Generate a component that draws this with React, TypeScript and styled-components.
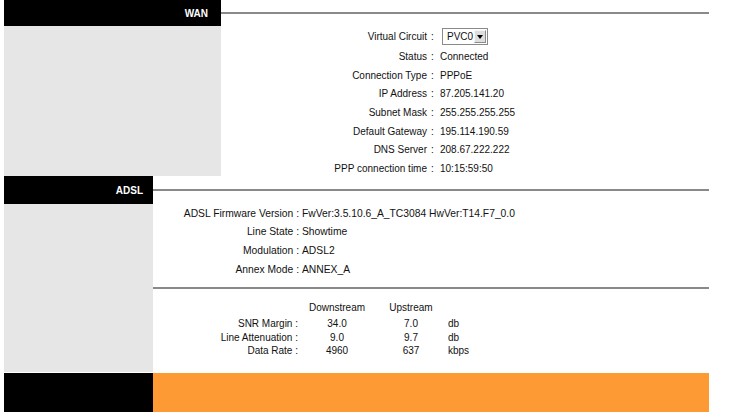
import React from 'react'
import styled, { createGlobalStyle } from 'styled-components'

const GlobalStyle = createGlobalStyle`
  body {
    margin: 0;
    background: #fff;
    font-family: "Liberation Sans", Arial, sans-serif;
    font-size: 10px;
    color: #111;
  }
`

const Page = styled.div`
  width: 705px;
  margin-left: 4px;
`

const Section = styled.section<{ $side: number }>`
  display: grid;
  grid-template-columns: ${(p) => p.$side}px 1fr;
`

const HeaderCell = styled.div<{ $height: number; $pad: number }>`
  height: ${(p) => p.$height}px;
  background: #000;
  color: #fff;
  font-weight: bold;
  font-size: 10px;
  display: flex;
  align-items: center;
  justify-content: flex-end;
  padding-right: ${(p) => p.$pad}px;
`

const HeaderRule = styled.div`
  align-self: center;
  height: 2px;
  background: #898989;
`

const Sidebar = styled.div`
  background: #e6e6e6;
`

const WanBody = styled.div`
  height: 150px;
  display: grid;
  grid-template-columns: 206px 13px 1fr;
  grid-template-rows: 21px;
  grid-auto-rows: 18.7px;
`

const Label = styled.div`
  display: flex;
  align-items: center;
  justify-content: flex-end;
  white-space: nowrap;
`

const Colon = styled.div`
  display: flex;
  align-items: center;
  padding-left: 4px;
`

const Value = styled.div<{ $pad?: number }>`
  display: flex;
  align-items: center;
  white-space: nowrap;
  padding-left: ${(p) => p.$pad ?? 0}px;
`

const SelectBox = styled.div`
  margin-left: 2px;
  width: 46px;
  height: 17px;
  box-sizing: border-box;
  border: 1px solid #8a8a8a;
  background: #fff;
  display: flex;
  align-items: stretch;
`

const SelectText = styled.span`
  flex: 1;
  display: flex;
  align-items: center;
  padding-left: 4px;
`

const SelectButton = styled.span`
  width: 13px;
  box-sizing: border-box;
  margin: 1px;
  background: #dedede;
  border: 1px solid;
  border-color: #f6f6f6 #8c8c8c #8c8c8c #f6f6f6;
  display: flex;
  align-items: center;
  justify-content: center;

  &::after {
    content: '';
    margin-top: 1px;
    border-left: 3.5px solid transparent;
    border-right: 3.5px solid transparent;
    border-top: 4px solid #000;
  }
`

const AdslBody = styled.div`
  height: 168px;
  display: flex;
  flex-direction: column;
`

const InfoGrid = styled.div`
  font-size: 10.3px;
  display: grid;
  grid-template-columns: 146px 1fr;
  grid-auto-rows: 18.6px;
`

const Divider = styled.div`
  margin-top: 8.6px;
  height: 2px;
  background: #898989;
`

const StatsGrid = styled.div`
  padding-top: 12px;
  display: grid;
  grid-template-columns: 145px 78px 70px 1fr;
  grid-template-rows: 16px;
  grid-auto-rows: 13.6px;
`

const StatHead = styled.div`
  text-align: center;
  line-height: 14px;
`

const StatLabel = styled.div`
  text-align: right;
  line-height: 13.6px;
  white-space: nowrap;
`

const StatValue = styled.div`
  text-align: center;
  line-height: 13.6px;
`

const StatUnit = styled.div`
  padding-left: 2px;
  line-height: 13.6px;
`

const Footer = styled.div`
  margin-top: 1px;
  height: 39px;
  display: grid;
  grid-template-columns: 149px 1fr;
`

const FooterBlack = styled.div`
  background: #000;
`

const FooterOrange = styled.div`
  background: #fe9a33;
`

const wanFields: [string, string][] = [
  ['Status', 'Connected'],
  ['Connection Type', 'PPPoE'],
  ['IP Address', '87.205.141.20'],
  ['Subnet Mask', '255.255.255.255'],
  ['Default Gateway', '195.114.190.59'],
  ['DNS Server', '208.67.222.222'],
  ['PPP connection time', '10:15:59:50'],
]

const adslFields: [string, string][] = [
  ['ADSL Firmware Version', 'FwVer:3.5.10.6_A_TC3084 HwVer:T14.F7_0.0'],
  ['Line State', 'Showtime'],
  ['Modulation', 'ADSL2'],
  ['Annex Mode', 'ANNEX_A'],
]

const stats: [string, string, string, string][] = [
  ['SNR Margin', '34.0', '7.0', 'db'],
  ['Line Attenuation', '9.0', '9.7', 'db'],
  ['Data Rate', '4960', '637', 'kbps'],
]

const App: React.FC = () => {
  return (
    <>
      <GlobalStyle />
      <Page>
        <Section $side={217}>
          <HeaderCell $height={26} $pad={13}>WAN</HeaderCell>
          <HeaderRule />
          <Sidebar />
          <WanBody>
            <Label>Virtual Circuit</Label>
            <Colon>:</Colon>
            <Value>
              <SelectBox>
                <SelectText>PVC0</SelectText>
                <SelectButton />
              </SelectBox>
            </Value>
            {wanFields.map(([label, value]) => (
              <React.Fragment key={label}>
                <Label>{label}</Label>
                <Colon>:</Colon>
                <Value>{value}</Value>
              </React.Fragment>
            ))}
          </WanBody>
        </Section>

        <Section $side={149}>
          <HeaderCell $height={28} $pad={10}>ADSL</HeaderCell>
          <HeaderRule />
          <Sidebar />
          <AdslBody>
            <InfoGrid>
              {adslFields.map(([label, value]) => (
                <React.Fragment key={label}>
                  <Label>{label} :</Label>
                  <Value $pad={3}>{value}</Value>
                </React.Fragment>
              ))}
            </InfoGrid>
            <Divider />
            <StatsGrid>
              <div />
              <StatHead>Downstream</StatHead>
              <StatHead>Upstream</StatHead>
              <div />
              {stats.map(([label, down, up, unit]) => (
                <React.Fragment key={label}>
                  <StatLabel>{label} :</StatLabel>
                  <StatValue>{down}</StatValue>
                  <StatValue>{up}</StatValue>
                  <StatUnit>{unit}</StatUnit>
                </React.Fragment>
              ))}
            </StatsGrid>
          </AdslBody>
        </Section>

        <Footer>
          <FooterBlack />
          <FooterOrange />
        </Footer>
      </Page>
    </>
  )
}

export default App
